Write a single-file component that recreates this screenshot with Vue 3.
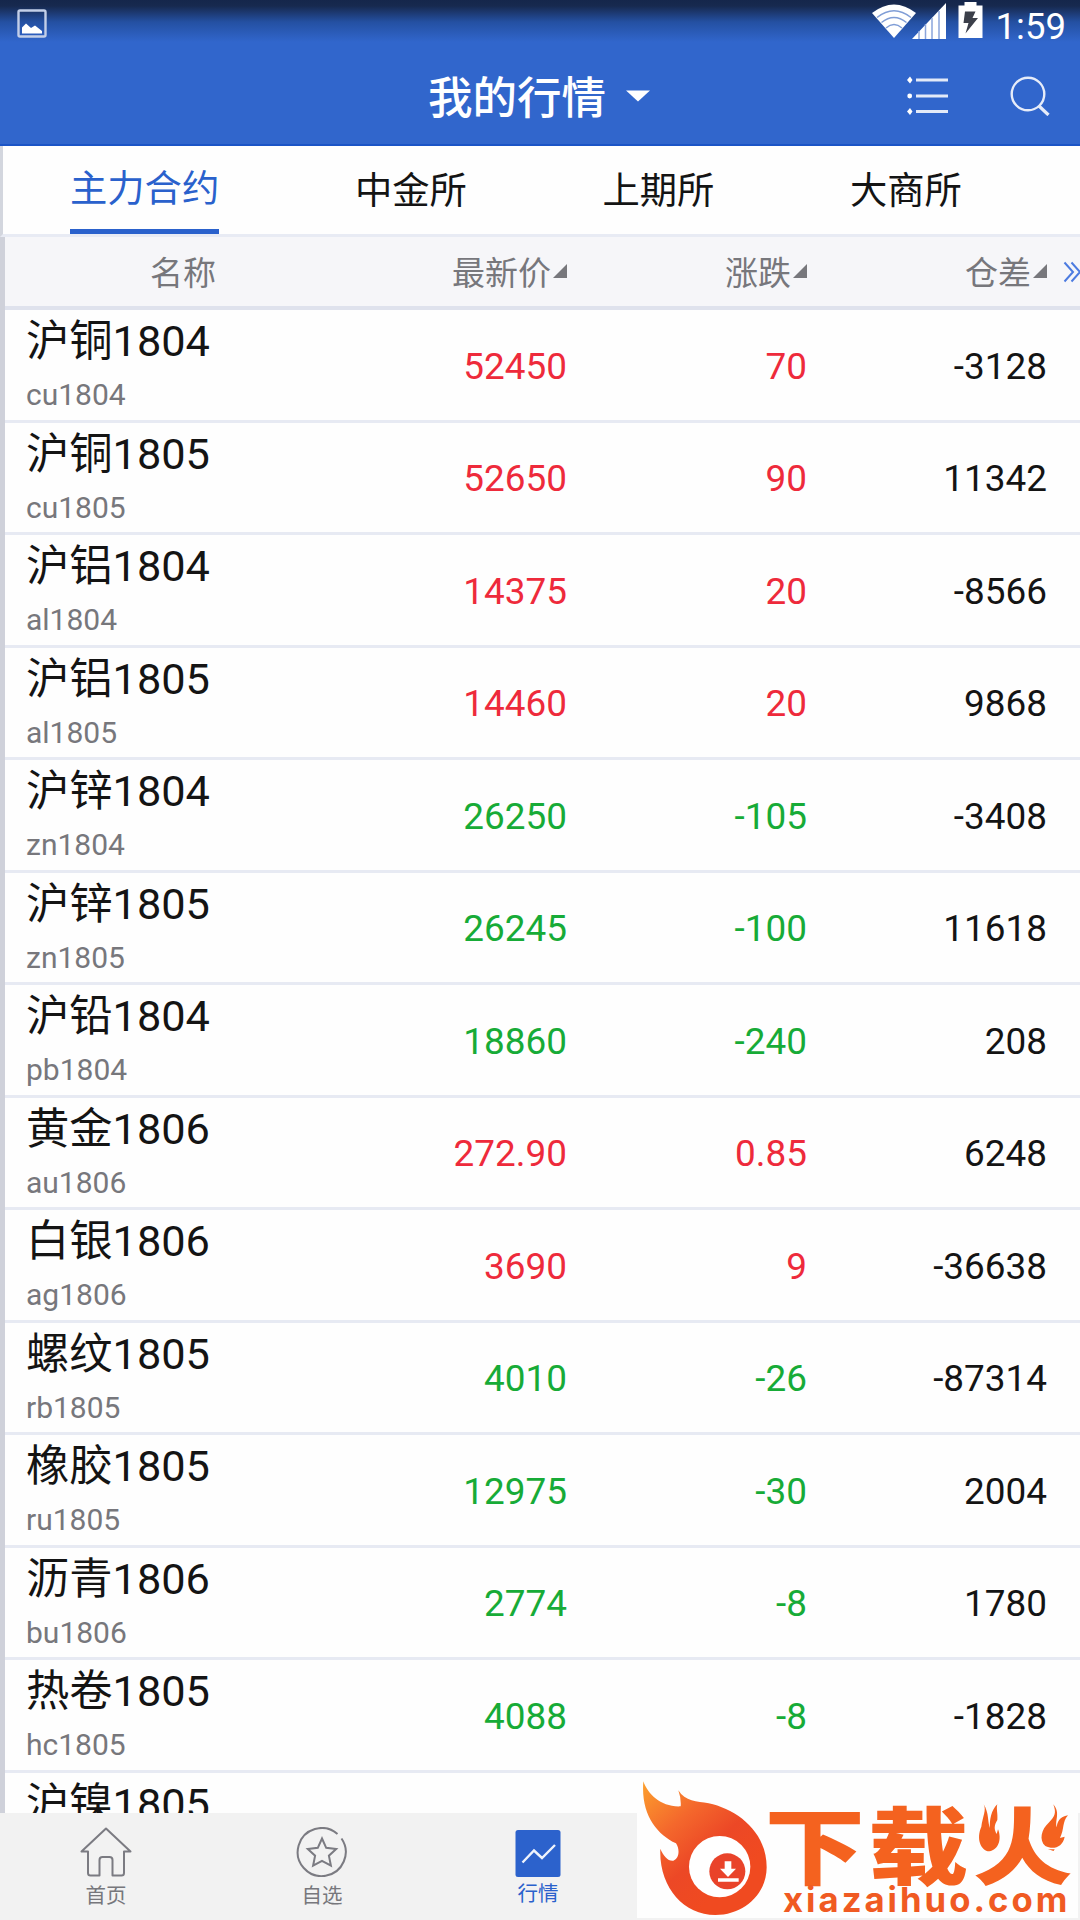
<script setup>
import { ref } from 'vue'

const tabs = ['主力合约', '中金所', '上期所', '大商所']
const activeTab = ref(0)

const columns = ['最新价', '涨跌', '仓差']

const quotes = [
  { name: '沪铜1804', code: 'cu1804', price: '52450', change: '70', diff: '-3128' },
  { name: '沪铜1805', code: 'cu1805', price: '52650', change: '90', diff: '11342' },
  { name: '沪铝1804', code: 'al1804', price: '14375', change: '20', diff: '-8566' },
  { name: '沪铝1805', code: 'al1805', price: '14460', change: '20', diff: '9868' },
  { name: '沪锌1804', code: 'zn1804', price: '26250', change: '-105', diff: '-3408' },
  { name: '沪锌1805', code: 'zn1805', price: '26245', change: '-100', diff: '11618' },
  { name: '沪铅1804', code: 'pb1804', price: '18860', change: '-240', diff: '208' },
  { name: '黄金1806', code: 'au1806', price: '272.90', change: '0.85', diff: '6248' },
  { name: '白银1806', code: 'ag1806', price: '3690', change: '9', diff: '-36638' },
  { name: '螺纹1805', code: 'rb1805', price: '4010', change: '-26', diff: '-87314' },
  { name: '橡胶1805', code: 'ru1805', price: '12975', change: '-30', diff: '2004' },
  { name: '沥青1806', code: 'bu1806', price: '2774', change: '-8', diff: '1780' },
  { name: '热卷1805', code: 'hc1805', price: '4088', change: '-8', diff: '-1828' },
  { name: '沪镍1805', code: '', price: '', change: '', diff: '' }
]

function trendClass(change) {
  return change.startsWith('-') ? 'is-down' : 'is-up'
}
</script>

<template>
  <div class="app">
    <header class="top">
      <div class="status">
        <svg class="status__picture" viewBox="0 0 30 29">
          <rect x="1.5" y="1.5" width="27" height="26" rx="1.5" fill="none" stroke="#c3cfe8" stroke-width="2.4" />
          <path d="M5 24.500V18.500L9 14.500l5 4.500 4-2.500 7 5.500v2.500z" fill="#fff" />
        </svg>
        <div class="status__right">
          <svg class="status__wifi" viewBox="0 0 44 34">
            <path d="M0 9Q22-8 44 9L22 34z" fill="#fff" />
            <g fill="none" stroke="#7f9dd6" stroke-width="1.500">
              <path d="M5 13.500Q22 0 39 13.500" />
              <path d="M9.500 18.500Q22 8.500 34.500 18.500" />
              <path d="M14 24Q22 17 30 24" />
            </g>
          </svg>
          <svg class="status__signal" viewBox="0 0 34 36">
            <path d="M0 36L34 0v36z" fill="#fff" />
            <path d="M7 28v8M13.500 21v15M20 15v21M27 8v28" stroke="#8ba5db" stroke-width="1.500" />
          </svg>
          <svg class="status__battery" viewBox="0 0 25 36">
            <path d="M6.500 0h12v3.500H24.500V36H.5V3.500h6z" fill="#fff" />
            <path d="M7 9.500h10.500l-3 6.500H20L7.500 31.500l3-10.500H5.500z" fill="#3b3f4a" />
          </svg>
          <span class="status__time">1:59</span>
        </div>
      </div>

      <div class="titlebar">
        <div class="titlebar__title">
          <span class="titlebar__text">我的行情</span>
          <svg class="titlebar__caret" viewBox="0 0 24 12"><path d="M0 .5h24L12 11.500z" fill="#fff" /></svg>
        </div>
        <svg class="titlebar__list" viewBox="0 0 42 40">
          <g fill="#fff">
            <path d="M0 4L3 .5 5.500 4 3 7.500z" />
            <circle cx="2.700" cy="20" r="2.400" />
            <path d="M0 35.500L3 32l2.500 3.500L3 39z" />
          </g>
          <path d="M9 4h32M9 20h32M9 35.500h32" stroke="#e3eaf8" stroke-width="3" />
        </svg>
        <svg class="titlebar__search" viewBox="0 0 40 40">
          <circle cx="18" cy="18" r="16.300" fill="none" stroke="#e6ecf9" stroke-width="2.400" />
          <path d="M29 30l9.500 9" stroke="#e6ecf9" stroke-width="3.200" />
        </svg>
      </div>
    </header>

    <nav class="tabs">
      <button
        v-for="(tab, index) in tabs"
        :key="tab"
        class="tabs__item"
        :class="{ 'is-active': index === activeTab }"
        type="button"
        @click="activeTab = index"
      >
        {{ tab }}
      </button>
    </nav>

    <main class="market">
      <div class="market__head">
        <span class="market__head-name">名称</span>
        <span v-for="column in columns" :key="column" class="market__head-cell">
          {{ column }}
          <svg class="market__sort" viewBox="0 0 14 14"><path d="M14 0v14H0z" fill="#77777c" /></svg>
        </span>
        <svg class="market__more" viewBox="0 0 20 22">
          <path d="M1.500 1.500L10 11l-8.500 9.500M8.500 1.500L17 11l-8.500 9.500" fill="none" stroke="#4c7be0" stroke-width="2" />
        </svg>
      </div>

      <div v-for="quote in quotes" :key="quote.name" class="quote">
        <div class="quote__title">
          <span class="quote__name">{{ quote.name }}</span>
          <span class="quote__code">{{ quote.code }}</span>
        </div>
        <span class="quote__value" :class="trendClass(quote.change)">{{ quote.price }}</span>
        <span class="quote__value" :class="trendClass(quote.change)">{{ quote.change }}</span>
        <span class="quote__value">{{ quote.diff }}</span>
      </div>
    </main>

    <nav class="bottom">
      <div class="bottom__item">
        <svg class="bottom__icon" viewBox="0 0 52 50" fill="none" stroke="#7b7b82" stroke-width="2">
          <path d="M26 1.500L1.500 24.500H8V46q0 2.500 2.500 2.500h9V33q0-3 3-3h7q3 0 3 3v15.500h9q2.500 0 2.500-2.500V24.500h6.500z" stroke-linejoin="round" />
        </svg>
        <span>首页</span>
      </div>
      <div class="bottom__item">
        <svg class="bottom__icon" viewBox="0 0 52 50" fill="none" stroke="#7b7b82" stroke-width="2">
          <path d="M41.500 7A24 24 0 1 0 45.500 11.500" />
          <path d="M26 11.500l4.200 9.300 10 1.100-7.300 6.800 2 10-8.900-4.900-8.900 4.900 2-10-7.300-6.800 10-1.100z" />
        </svg>
        <span>自选</span>
      </div>
      <div class="bottom__item is-active">
        <svg class="bottom__icon" viewBox="0 0 52 50">
          <rect x="3.500" y="3" width="45" height="47" rx="2.500" fill="#2c62cc" />
          <path d="M10.500 35.500L22 23.500l8 7.500 13-13" fill="none" stroke="#eef3fc" stroke-width="2.400" />
        </svg>
        <span>行情</span>
      </div>
    </nav>

    <svg class="brand" viewBox="51 48 1323 426">
      <defs>
        <linearGradient id="flame" x1="0" y1="0" x2=".65" y2=".8">
          <stop offset="0" stop-color="#fca02e" />
          <stop offset=".4" stop-color="#f4672c" />
          <stop offset=".7" stop-color="#ec4826" />
          <stop offset="1" stop-color="#f04a20" />
        </linearGradient>
      </defs>
      <rect x="51" y="48" width="1323" height="426" fill="#fefefe" />
      <path
        d="M70 64C84 104 124 142 182 139Q184 116 175 91C196 124 230 124 266 130C350 148 440 214 440 322C440 402 372 465 286 465C190 465 116 380 121 266C130 288 144 304 160 302C178 296 180 268 168 250C110 222 62 164 70 64Z"
        fill="url(#flame)"
      />
      <circle cx="299" cy="320" r="92" fill="#fff" />
      <circle cx="322" cy="334" r="54" fill="#e9432a" />
      <path d="M314 304h20v22h14l-24 25-24-25h14zM294 355h62v10h-62z" fill="#fff" />
      <g class="brand__name">
        <text transform="translate(434 353) scale(1.12 .94)">下</text>
        <text transform="translate(745 353) scale(1.12 .94)">载</text>
        <text transform="translate(1058 353) scale(1.12 .94)">火</text>
      </g>
      <!-- the side strokes of the last character are drawn as two small flames -->
      <path d="M1070 128h88l-4 150h-88zM1256 128h100v140h-100z" fill="#fefefe" />
      <g fill="#f4621f">
        <path d="M1091 133C1100 150 1088 170 1084 200C1068 236 1082 272 1108 274C1136 270 1146 236 1134 208L1130 222C1122 208 1122 196 1132 180C1134 160 1128 146 1132 133C1114 150 1108 180 1110 204C1102 186 1108 160 1091 133Z" />
        <path d="M1300 133C1310 160 1304 170 1286 188C1264 208 1256 240 1276 258C1300 270 1328 262 1334 230L1320 234C1334 206 1326 186 1344 166C1318 170 1312 186 1310 202C1304 180 1322 160 1300 133Z" />
      </g>
      <text class="brand__site" x="489" y="456" textLength="853">xiazaihuo.com</text>
    </svg>
  </div>
</template>

<style>
body {
  margin: 0;
  overflow: hidden;
}
</style>

<style scoped>
.app {
  position: relative;
  display: flex;
  flex-direction: column;
  width: 1080px;
  height: 1920px;
  overflow: hidden;
  background: #fefefe;
  color: #141414;
  font-family: Roboto, "Noto Sans CJK SC", sans-serif;
}

.top {
  flex: none;
  height: 146px;
  box-sizing: border-box;
  border-bottom: 2px solid #1b54c6;
  background: linear-gradient(#15264b 0, #17294f 6px, #2450a2 22px, #3166cc 42px);
  color: #fff;
}

.status {
  display: flex;
  justify-content: space-between;
  height: 48px;
  padding: 0 14px 0 17px;
}

.status__picture {
  width: 30px;
  height: 29px;
  margin-top: 9px;
}

.status__right {
  display: flex;
  align-items: flex-start;
}

.status__wifi {
  width: 44px;
  height: 34px;
  margin-top: 4px;
}

.status__signal {
  width: 34px;
  height: 36px;
  margin: 3px 12px 0 -4px;
}

.status__battery {
  width: 25px;
  height: 36px;
  margin: 2px 13px 0 0;
}

.status__time {
  margin-top: 5px;
  font-size: 36.5px;
  line-height: 44px;
}

.titlebar {
  display: grid;
  grid-template-columns: 907px 103px 1fr;
  align-items: center;
  height: 96px;
}

.titlebar__title {
  display: flex;
  align-items: center;
  gap: 20px;
  padding-left: 428px;
  font-size: 44.5px;
  font-weight: 500;
  line-height: 60px;
}

.titlebar__text {
  padding-top: 5px;
}

.titlebar__caret {
  width: 24px;
  height: 12px;
}

.titlebar__list {
  width: 42px;
  height: 40px;
}

.titlebar__search {
  width: 40px;
  height: 40px;
}

.tabs {
  display: flex;
  flex: none;
  gap: 135.7px;
  height: 91px;
  box-sizing: border-box;
  padding-left: 67px;
  border-left: 3px solid #d3d6de;
  border-bottom: 3px solid #e8ebf4;
}

.tabs__item {
  height: 88px;
  padding: 2px 0 0;
  border: 0;
  background: none;
  color: #141414;
  font: 37.3px/80px Roboto, "Noto Sans CJK SC", sans-serif;
  white-space: nowrap;
}

.tabs__item.is-active {
  padding: 2px 0 0;
  border-bottom: 5px solid #2a61cc;
  color: #2a61cc;
}

.market {
  flex: 1;
  min-height: 0;
  overflow: hidden;
  border-left: 5px solid #cfd1da;
}

.market__head,
.quote {
  display: grid;
  grid-template-columns: 300px 262px 240px 240px 1fr;
  box-sizing: border-box;
}

.market__head {
  align-items: center;
  height: 73px;
  border-bottom: 4px solid #dfe2ed;
  background: #f6f6f9;
  color: #77777c;
  font-size: 33px;
  line-height: 60px;
}

.market__head-name {
  padding: 5px 0 0 145px;
}

.market__head-cell {
  display: flex;
  align-items: center;
  justify-content: flex-end;
  gap: 2px;
  padding-top: 5px;
}

.market__sort {
  width: 14px;
  height: 14px;
  margin-bottom: 6px;
}

.market__more {
  width: 20px;
  height: 22px;
  margin: 1px 0 0 16px;
}

.quote {
  height: 112.5px;
  border-bottom: 3px solid #e7eaf3;
}

.quote__title {
  display: flex;
  flex-direction: column;
  padding: 7px 0 0 21px;
}

.quote__name {
  height: 50px;
  font-size: 43.3px;
  line-height: 50px;
}

.quote__code {
  margin-top: 13px;
  color: #77777c;
  font-size: 30px;
  line-height: 30px;
}

.quote__value {
  padding-top: 2.500px;
  font-size: 36.9px;
  line-height: 107px;
  text-align: right;
}

.quote__value.is-up {
  color: #ee2a3b;
}

.quote__value.is-down {
  color: #17ab37;
}

.bottom {
  display: flex;
  flex: none;
  height: 107px;
  box-sizing: border-box;
  background: #f2f2f2;
}

.bottom__item {
  display: flex;
  flex-direction: column;
  align-items: center;
  width: 216px;
  box-sizing: border-box;
  padding: 14px 4px 0 0;
  color: #77777c;
  font-size: 20.5px;
  line-height: 30px;
}

.bottom__item span {
  margin-top: 4px;
}

.bottom__item.is-active {
  color: #2a61cc;
}

.bottom__item.is-active span {
  margin-top: 2px;
}

.bottom__icon {
  width: 52px;
  height: 50px;
}

/* Site badge floats over the corner of the list and the bottom bar */
.brand {
  position: absolute;
  left: 637px;
  top: 1776px;
  width: 441px;
  height: 142px;
  overflow: visible;
}

.brand__name {
  fill: #f4621f;
  font: 900 268px "Noto Sans CJK SC", sans-serif;
}

.brand__site {
  fill: #f05a22;
  font: 700 104px Inter, sans-serif;
}
</style>
